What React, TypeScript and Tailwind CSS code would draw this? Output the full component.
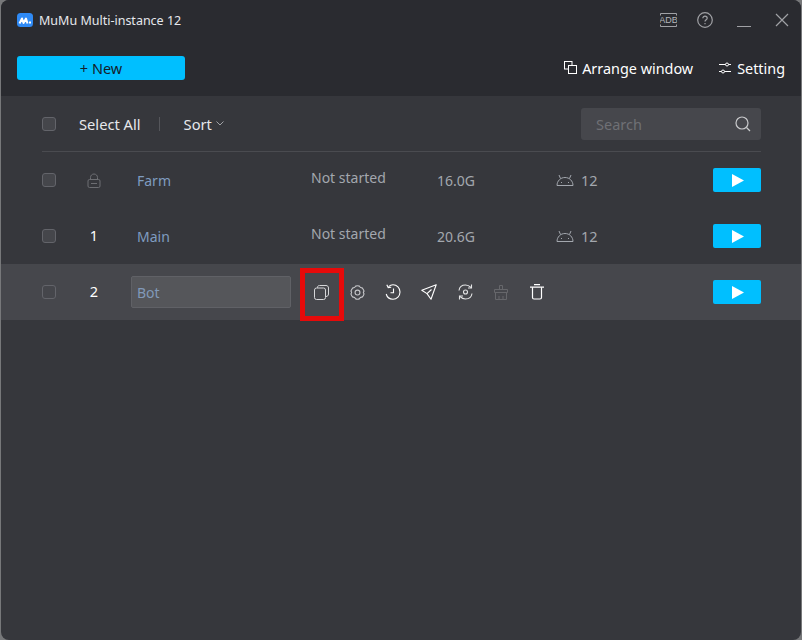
import React from "react";

const font = { fontFamily: '"Noto Sans", "Open Sans", sans-serif' };

const Check = () => <span className="block w-[14px] h-[14px] rounded-[3px] border border-[#63646a] bg-[#45464b]" />;

const Play = () => (
  <button className="w-[48px] h-[24px] rounded-[2px] bg-[#00bfff] flex items-center justify-center pl-px">
    <svg width="12" height="13" viewBox="0 0 12 13">
      <path d="M0 0 L12 6.5 L0 13 Z" fill="#fff" />
    </svg>
  </button>
);

const Android = () => (
  <svg width="18" height="12" viewBox="0 0 18 12" fill="none" stroke="#a3a7ae" strokeWidth="1">
    <path d="M1 11.5 C1 7 4.5 3.5 9 3.5 C13.5 3.5 17 7 17 11.5 Z" />
    <path d="M4.5 4.5 L3 1 M13.5 4.5 L15 1" />
    <path d="M5 8.5 h1 M12 8.5 h1" />
  </svg>
);

const Lock = () => (
  <svg width="14" height="15" viewBox="0 0 14 15" fill="none" stroke="#6d6e73" strokeWidth="1">
    <rect x="1" y="6.5" width="12" height="8" rx="1.5" />
    <path d="M3.5 6.5 V4.5 C3.5 2.5 5 1 7 1 C9 1 10.5 2.5 10.5 4.5 V6.5" />
    <path d="M4 10.5 H10" />
  </svg>
);

function Row({ num, name, status, mem }: { num?: string; name: string; status: string; mem: string }) {
  return (
    <div className="h-[56px] flex items-center pl-[41px] pr-[40px]">
      <Check />
      <div className="w-[64px] ml-[6px] flex justify-center text-[14.5px] text-white">{num ?? <Lock />}</div>
      <div className="w-[174px] ml-[11px] text-[14px] text-[#7f9cc0]">{name}</div>
      <div className="w-[126px] text-[14px] text-[#a3a7ae] -translate-y-[3px]">{status}</div>
      <div className="w-[119px] text-[14px] text-[#a3a7ae]">{mem}</div>
      <div className="flex items-center gap-[7px] text-[14.5px] text-[#a3a7ae]">
        <Android />
        <span className="mt-px">12</span>
      </div>
      <div className="ml-auto">
        <Play />
      </div>
    </div>
  );
}

const tool = "w-[36px] flex justify-center";

export default function App() {
  return (
    <div className="w-[802px] h-[640px] bg-[#77787a] overflow-hidden" style={font}>
      <div className="ml-px w-[800px] h-[640px] rounded-[8px] overflow-hidden bg-[#36373c] flex flex-col">
        <header className="h-[96px] bg-[#2a2b30] shrink-0">
          <div className="h-[40px] flex items-center pl-[16px] pr-[12px]">
            <svg width="16" height="14" viewBox="0 0 16 14">
              <rect width="16" height="14" rx="3.5" fill="#2f8af5" />
              <path d="M2.5 10.5 L5 5.5 L6.5 10 L9 5.5 L10.5 10.5" stroke="#fff" strokeWidth="2" fill="none" strokeLinejoin="round" />
              <path d="M12 9.5 H14" stroke="#fff" strokeWidth="2" />
            </svg>
            <span className="ml-[6px] mt-[2px] text-[12.5px] text-[#e6e8ec]">MuMu Multi-instance 12</span>
            <div className="ml-auto flex items-center">
              <svg width="17" height="14" viewBox="0 0 17 14" fill="none" stroke="#a0a1a5" strokeWidth="1">
                <path d="M0.5 2.5 V0.5 H16.5 V2.5 M0.5 11.5 V13.5 H16.5 V11.5" />
                <text x="8.5" y="10" textAnchor="middle" fontSize="9" fill="#b4b5b8" stroke="none" fontFamily="Liberation Sans, sans-serif">ADB</text>
              </svg>
              <svg className="ml-[20px]" width="16" height="16" viewBox="0 0 16 16" fill="none" stroke="#a0a1a5" strokeWidth="1.2">
                <circle cx="8" cy="8" r="7.3" />
                <path d="M5.8 6.2 C5.8 3.4 10.2 3.4 10.2 6.2 C10.2 7.8 8 7.8 8 9.6" />
                <path d="M8 11 V12.2" />
              </svg>
              <span className="ml-[24px] mt-[13px] block w-[14px] h-px bg-[#a0a1a5]" />
              <svg className="ml-[24px]" width="14" height="14" viewBox="0 0 14 14" stroke="#a0a1a5" strokeWidth="1.2">
                <path d="M1 1 L13 13 M13 1 L1 13" />
              </svg>
            </div>
          </div>
          <div className="h-[24px] mt-[16px] flex items-center pl-[16px] pr-[16px]">
            <button className="w-[168px] h-[24px] rounded-[3px] bg-[#00bfff] pt-[2px] text-[14.5px] text-[#14202a]">+ New</button>
            <div className="ml-auto flex items-center text-[14.4px] text-white">
              <svg width="13" height="13" viewBox="0 0 13 13" fill="none" stroke="#fff" strokeWidth="1">
                <rect x="0.5" y="0.5" width="7.5" height="7.5" />
                <rect x="4.5" y="4.5" width="8" height="8" fill="#2a2b30" />
              </svg>
              <span className="ml-[5px] mt-[2px]">Arrange window</span>
              <svg className="ml-[26px]" width="12" height="12" viewBox="0 0 12 12" fill="none" stroke="#fff" strokeWidth="1">
                <path d="M0 2.5 H6.5 M9.5 2.5 H12 M0 9.5 H2.5 M5.5 9.5 H12" />
                <circle cx="8" cy="2.5" r="1.5" />
                <circle cx="4" cy="9.5" r="1.5" />
              </svg>
              <span className="ml-[6px] mt-[2px]">Setting</span>
            </div>
          </div>
        </header>

        <div className="ml-[41px] mr-[40px] h-[56px] border-b border-[#4a4b50] flex items-center">
          <Check />
          <span className="ml-[23px] mt-px text-[14.7px] text-[#e6e8ec]">Select All</span>
          <span className="ml-[18px] w-px h-[14px] bg-[#55565b]" />
          <span className="ml-[24px] mt-px text-[14.7px] text-[#e6e8ec]">Sort</span>
          <svg className="ml-[4px]" width="8" height="5" viewBox="0 0 8 5" fill="none" stroke="#a0a1a5">
            <path d="M0.5 0.5 L4 4 L7.5 0.5" />
          </svg>
          <div className="ml-auto w-[180px] h-[32px] rounded-[3px] bg-[#46474c] flex items-center pl-[15px] pr-[10px] text-[14.5px] text-[#6f7075]">
            <span className="mt-[2px]">Search</span>
            <svg className="ml-auto" width="16" height="16" viewBox="0 0 16 16" fill="none" stroke="#c9cacc" strokeWidth="1.2">
              <circle cx="7" cy="7" r="6" />
              <path d="M11.5 11.5 L15 15" />
            </svg>
          </div>
        </div>

        <Row name="Farm" status="Not started" mem="16.0G" />
        <Row num="1" name="Main" status="Not started" mem="20.6G" />

        <div className="h-[56px] flex items-center pl-[41px] pr-[40px] bg-[#46474c]">
          <Check />
          <div className="w-[64px] ml-[6px] text-center text-[14.5px] text-white">2</div>
          <div className="ml-[5px] w-[160px] h-[32px] rounded-[2px] border border-[#606166] bg-[#55565a] flex items-center pl-[5px] text-[14px] text-[#8199b8]">Bot</div>
          <div className="ml-[9px] mt-[5px] w-[44px] h-[53px] border-[5px] border-[#e60a0a] flex items-center justify-center pb-[5px] pr-[2px] z-10">
            <svg width="15" height="15" viewBox="0 0 15 15" fill="none" stroke="#d5d6d8" strokeWidth="1">
              <rect x="0.5" y="3" width="11" height="11.5" rx="2" />
              <path d="M3.5 3 V2.5 C3.5 1.2 4.2 0.5 5.5 0.5 H12 C13.5 0.5 14.5 1.5 14.5 3 V9 C14.5 10.5 13.5 11.5 12 11.5" />
            </svg>
          </div>
          <div className="flex items-center ml-[-5px]">
            <div className={tool}>
              <svg width="15" height="15" viewBox="0 0 16 16" fill="none" stroke="#c4c5c8" strokeWidth="1.2">
                <path d="M6 1.2 Q8 0.4 10 1.2 Q10.8 3.2 13 3 Q14.4 4.6 15 6.6 Q13.6 8 15 9.4 Q14.4 11.4 13 13 Q10.8 12.8 10 14.8 Q8 15.6 6 14.8 Q5.2 12.8 3 13 Q1.6 11.4 1 9.4 Q2.4 8 1 6.6 Q1.6 4.6 3 3 Q5.2 3.2 6 1.2 Z" strokeLinejoin="round" />
                <circle cx="8" cy="8" r="2.6" />
              </svg>
            </div>
            <div className={tool}>
              <svg width="16" height="16" viewBox="0 0 16 16" fill="none" stroke="#fff" strokeWidth="1.1">
                <path d="M3.6 2.6 C4.9 1.4 6.3 0.8 8 0.8 C11.9 0.8 15 4 15 8 C15 12 11.9 15.2 8 15.2 C4.8 15.2 2 13 1.2 10" />
                <path d="M1.8 0.8 L3.2 3.6 L6.2 3.2" />
                <path d="M8.5 4.5 V8.8 H5.5" />
              </svg>
            </div>
            <div className={tool}>
              <svg width="16" height="16" viewBox="0 0 16 16" fill="none" stroke="#fff" strokeWidth="1.1" strokeLinejoin="round">
                <path d="M15.2 0.8 L0.8 6.2 L6 9.6 L10 15.2 Z" />
                <path d="M6 9.6 L10.5 5.5" />
              </svg>
            </div>
            <div className={tool}>
              <svg width="15" height="16" viewBox="0 0 15 16" fill="none" stroke="#e4e5e6" strokeWidth="1.1">
                <path d="M1 6.5 C1.5 3 4 1 7.5 1 C9.5 1 11.5 2 13 3.5" />
                <path d="M14 9.5 C13.5 13 11 15 7.5 15 C5.5 15 3.5 14 2 12.5" />
                <path d="M13.5 0.5 V4 H10 M1.5 15.5 V12 H5" />
                <circle cx="7.5" cy="8" r="2" />
              </svg>
            </div>
            <div className={tool}>
              <svg width="14" height="15" viewBox="0 0 14 15" fill="none" stroke="#66676b" strokeWidth="1">
                <path d="M5.5 4.5 V0.5 H8.5 V4.5" />
                <path d="M0.5 4.5 H13.5 V7.5 H0.5 Z" />
                <path d="M1.5 7.5 V14.5 H12.5 V7.5 M5 11 V14.5 M9 11 V14.5" />
              </svg>
            </div>
            <div className={tool}>
              <svg width="14" height="16" viewBox="0 0 14 16" fill="none" stroke="#fff" strokeWidth="1.2">
                <path d="M0 3.2 H14 M4 0.7 H10" />
                <path d="M2.5 3.2 V13.5 C2.5 14.5 3 15 4 15 H10 C11 15 11.5 14.5 11.5 13.5 V3.2" />
              </svg>
            </div>
          </div>
          <div className="ml-auto">
            <Play />
          </div>
        </div>
      </div>
    </div>
  );
}
